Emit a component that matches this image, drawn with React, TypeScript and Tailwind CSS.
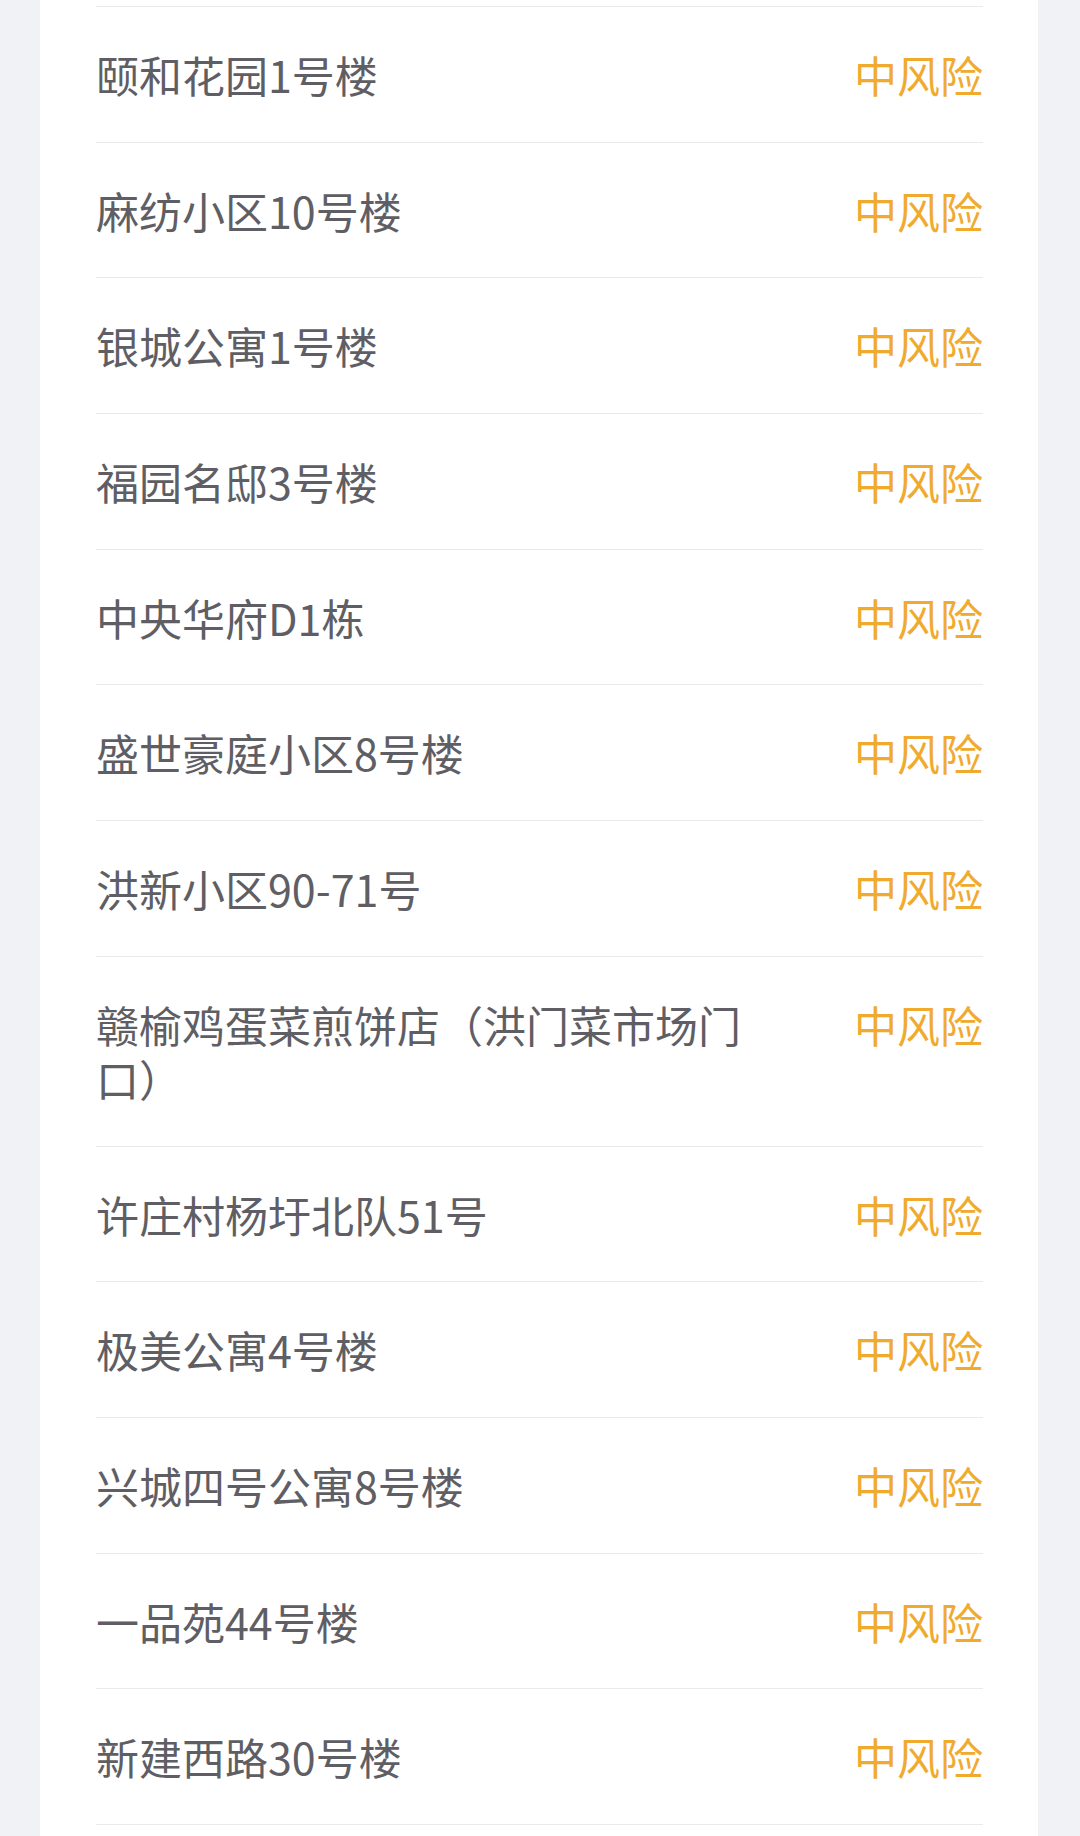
import React from "react";

const rows: string[] = [
  "颐和花园1号楼",
  "麻纺小区10号楼",
  "银城公寓1号楼",
  "福园名邸3号楼",
  "中央华府D1栋",
  "盛世豪庭小区8号楼",
  "洪新小区90-71号",
  "赣榆鸡蛋菜煎饼店（洪门菜市场门口）",
  "许庄村杨圩北队51号",
  "极美公寓4号楼",
  "兴城四号公寓8号楼",
  "一品苑44号楼",
  "新建西路30号楼",
];

export default function App() {
  return (
    <div
      className="w-[1080px] h-[1836px] overflow-hidden bg-[#f1f2f6]"
      style={{ fontFamily: '"Noto Sans CJK SC", "Noto Sans", sans-serif' }}
    >
      <div className="ml-[40px] w-[998px] h-full bg-white pl-[56px] pr-[55px]">
        <div className="h-[7px] border-b border-[#e9eaec]" />
        {rows.map((name) => (
          <div
            key={name}
            className="flex items-start justify-between gap-[80px] border-b border-[#e9eaec] pt-[40px] pb-[40.7px]"
          >
            <div className="flex-1 text-[43px] leading-[54px] text-[#5e5e64]">
              {name}
            </div>
            <div className="shrink-0 text-[43px] leading-[54px] text-[#f0aa2e]">
              中风险
            </div>
          </div>
        ))}
      </div>
    </div>
  );
}
